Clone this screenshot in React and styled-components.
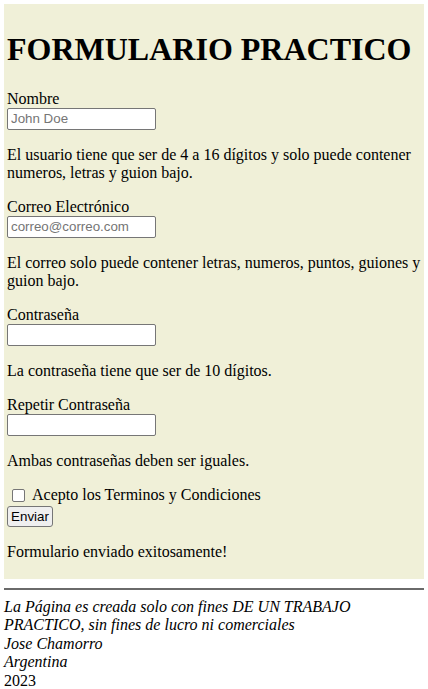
import styled, { createGlobalStyle } from "styled-components";

const GlobalStyle = createGlobalStyle`
  body {
    margin: 0;
    padding: 4px;
    font-family: "Liberation Serif", "Times New Roman", serif;
    font-size: 16px;
    color: #000;
    background: #fff;
  }
`

const FormBox = styled.form`
  background: #f0f0d8;
  padding: 6px 3px 2px 3px;
`

const Title = styled.h1`
  font-size: 32px;
  font-weight: bold;
  margin: 21.44px 0;
`

const Label = styled.label`
  display: block;
`

const TextInput = styled.input`
  display: block;
  box-sizing: border-box;
  width: 149px;
  height: 22px;
  padding: 1px 3px;
  border: 1px solid #767676;
  border-radius: 2px;
  background: #fff;
  font-family: "Liberation Sans", Arial, sans-serif;
  font-size: 13.33px;

  &::placeholder {
    color: #757575;
  }
`

const Hint = styled.p`
  margin: 16px 0;
`

const CheckRow = styled.div`
  display: flex;
  align-items: center;
  height: 18px;
`

const Check = styled.input`
  appearance: none;
  box-sizing: border-box;
  width: 13px;
  height: 13px;
  margin: 1px 7px 0 5px;
  border: 1px solid #767676;
  border-radius: 2px;
  background: #fff;
`

const SubmitButton = styled.button`
  display: block;
  box-sizing: border-box;
  width: 46px;
  margin-top: 2px;
  height: 21px;
  padding: 1px 0;
  border: 1px solid #767676;
  border-radius: 3px;
  background: #efefef;
  font-family: "Liberation Sans", Arial, sans-serif;
  font-size: 13.33px;
  color: #000;
`

const Divider = styled.hr`
  margin: 9px 0 8px 0;
  border: 0;
  border-top: 2px solid #6a6a6a;
`

const Footer = styled.address`
  font-style: italic;
  line-height: 18.4px;
`

const Year = styled.span`
  font-style: normal;
`

const App = () => {
  const handleSubmit = (e) => {
    e.preventDefault()
  }

  return (
    <>
      <GlobalStyle />
      <FormBox onSubmit={handleSubmit}>
        <Title>FORMULARIO PRACTICO</Title>

        <Label htmlFor="nombre">Nombre</Label>
        <TextInput id="nombre" type="text" placeholder="John Doe" />
        <Hint>El usuario tiene que ser de 4 a 16 dígitos y solo puede contener numeros, letras y guion bajo.</Hint>

        <Label htmlFor="correo">Correo Electrónico</Label>
        <TextInput id="correo" type="email" placeholder="correo@correo.com" />
        <Hint>El correo solo puede contener letras, numeros, puntos, guiones y guion bajo.</Hint>

        <Label htmlFor="pass">Contraseña</Label>
        <TextInput id="pass" type="password" />
        <Hint>La contraseña tiene que ser de 10 dígitos.</Hint>

        <Label htmlFor="pass2">Repetir Contraseña</Label>
        <TextInput id="pass2" type="password" />
        <Hint>Ambas contraseñas deben ser iguales.</Hint>

        <CheckRow>
          <Check id="terminos" type="checkbox" />
          <label htmlFor="terminos">Acepto los Terminos y Condiciones</label>
        </CheckRow>
        <SubmitButton type="submit">Enviar</SubmitButton>

        <Hint>Formulario enviado exitosamente!</Hint>
      </FormBox>

      <Divider />

      <Footer>
        La Página es creada solo con fines DE UN TRABAJO PRACTICO, sin fines de lucro ni comerciales
        <br />
        Jose Chamorro
        <br />
        Argentina
        <br />
        <Year>2023</Year>
      </Footer>
    </>
  )
}

export default App
